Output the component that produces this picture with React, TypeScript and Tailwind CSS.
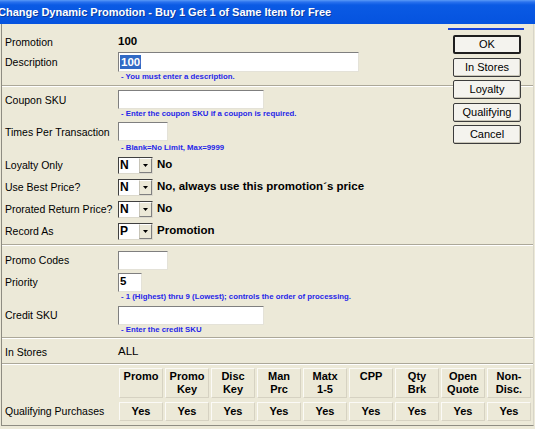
import React from "react";

const font = "font-['Liberation_Sans',Arial,sans-serif]";
const hintCls = "text-[7.8px] font-bold text-[#2626e8] leading-[10px]";

const Label = ({ children }: { children: React.ReactNode }) => (
  <div className="w-[113px] shrink-0 text-[10.5px] leading-[12px] whitespace-nowrap">{children}</div>
);

const TextBox = ({ w, h = 19, children }: { w: number; h?: number; children?: React.ReactNode }) => (
  <div
    className="flex items-center bg-white border border-t-[#7f7f7f] border-l-[#7f7f7f] border-r-[#e4e2d8] border-b-[#e4e2d8] pl-[1px]"
    style={{ width: w, height: h }}
  >
    {children}
  </div>
);

const Hint = ({ children }: { children: React.ReactNode }) => (
  <div className={`h-[10px] pl-[119px] ${hintCls} whitespace-nowrap`}>{children}</div>
);

const Divider = ({ className = "" }: { className?: string }) => (
  <div className={`h-[2px] border-t border-t-[#aca899] border-b border-b-white ${className}`} />
);

const ComboRow = ({ label, value, text }: { label: string; value: string; text: string }) => (
  <div className="flex items-center h-[22px] pl-[3px]">
    <Label>{label}</Label>
    <div className="flex h-[17px] w-[35px] bg-white border border-t-[#404040] border-l-[#404040] border-r-[#dcd9cc] border-b-[#dcd9cc]">
      <div className="flex-1 flex items-center pl-[1px] text-[12px] font-bold leading-none">{value}</div>
      <div className="w-[13px] h-full flex items-center justify-center bg-[#ece9d8] border border-t-white border-l-[#c8c5b8] border-r-[#808080] border-b-[#808080]">
        <svg width="5" height="3" viewBox="0 0 5 3">
          <path d="M0 0H5L2.5 3Z" fill="#000" />
        </svg>
      </div>
    </div>
    <div className="ml-[4px] text-[11.5px] font-bold whitespace-nowrap">{text}</div>
  </div>
);

const Btn = ({ label, primary }: { label: string; primary?: boolean }) => (
  <div
    className={`h-[19px] w-[68px] flex items-center justify-center text-[11px] rounded-[2px] bg-[#f4f3ee] ${
      primary ? "border-2 border-[#1e1e1e]" : "border border-[#3c3c3c] shadow-[inset_-1px_-1px_0_#c9c6b8]"
    }`}
  >
    {label}
  </div>
);

const columns = [
  ["Promo", ""],
  ["Promo", "Key"],
  ["Disc", "Key"],
  ["Man", "Prc"],
  ["Matx", "1-5"],
  ["CPP", ""],
  ["Qty", "Brk"],
  ["Open", "Quote"],
  ["Non-", "Disc."],
];

const cellCls =
  "w-[44px] bg-[#ece9d8] border border-t-[#fbfaf6] border-l-[#fbfaf6] border-r-[#d6d2c2] border-b-[#d6d2c2] text-[11px] font-bold text-center";

export default function App() {
  return (
    <div className={`w-[535px] h-[429px] bg-[#ece9d8] flex flex-col overflow-hidden text-black ${font}`}>
      {/* title bar */}
      <div className="h-[24px] shrink-0 flex items-center bg-[linear-gradient(to_bottom,#5a9af7_0px,#2a72ee_2px,#0a5ae4_5px,#0553df_100%)]">
        <span className="-ml-[2px] text-white font-bold text-[11px] whitespace-nowrap [text-shadow:1px_1px_0_#0a3aa0]">
          Change Dynamic Promotion - Buy 1 Get 1 of Same Item for Free
        </span>
      </div>

      {/* dialog body */}
      <div className="relative flex-1 mx-[1px] mb-[3px] border-l border-r border-b border-l-[#8e8c82] border-r-[#d8d5c8] border-b-[#8e8c82] flex flex-col">
        {/* buttons, drawn over the divider */}
        <div className="absolute top-[4px] left-[446px] w-[76px] flex flex-col">
          <div className="h-[2px] bg-[#1a44dc]" />
          <div className="mt-[5px] ml-[5px] flex flex-col gap-[3.5px]">
            <Btn label="OK" primary />
            <Btn label="In Stores" />
            <Btn label="Loyalty" />
            <Btn label="Qualifying" />
            <Btn label="Cancel" />
          </div>
        </div>

        <div className="mt-[8px] h-[20px] flex items-center pl-[3px]">
          <Label>Promotion</Label>
          <div className="text-[11.5px] font-bold">100</div>
        </div>
        <div className="h-[20px] flex items-center pl-[3px]">
          <Label>Description</Label>
          <TextBox w={241} h={20}>
            <span className="bg-[#316ac5] text-white font-bold text-[11.5px] leading-[14px] px-[1px]">100</span>
          </TextBox>
        </div>
        <Hint>- You must enter a description.</Hint>
        <Divider className="mt-[3px]" />

        <div className="mt-[3px] h-[19px] flex items-center pl-[3px]">
          <Label>Coupon SKU</Label>
          <TextBox w={146} />
        </div>
        <Hint>- Enter the coupon SKU if a coupon is required.</Hint>

        <div className="mt-[3px] h-[19px] flex items-center pl-[3px]">
          <Label>Times Per Transaction</Label>
          <TextBox w={50} />
        </div>
        <div className="mt-[2px]">
          <Hint>- Blank=No Limit, Max=9999</Hint>
        </div>

        <div className="mt-[1px]">
          <ComboRow label="Loyalty Only" value="N" text="No" />
          <ComboRow label="Use Best Price?" value="N" text="No, always use this promotion´s price" />
          <ComboRow label="Prorated Return Price?" value="N" text="No" />
          <ComboRow label="Record As" value="P" text="Promotion" />
        </div>
        <Divider className="mt-[2px]" />

        <div className="mt-[4px] h-[20px] flex items-center pl-[3px]">
          <Label>Promo Codes</Label>
          <TextBox w={50} />
        </div>
        <div className="mt-[2px] h-[20px] flex items-center pl-[3px]">
          <Label>Priority</Label>
          <TextBox w={24}>
            <span className="text-[11.5px] font-bold">5</span>
          </TextBox>
        </div>
        <Hint>- 1 (Highest) thru 9 (Lowest); controls the order of processing.</Hint>

        <div className="mt-[3px] h-[20px] flex items-center pl-[3px]">
          <Label>Credit SKU</Label>
          <TextBox w={146} />
        </div>
        <Hint>- Enter the credit SKU</Hint>
        <Divider className="mt-[2px]" />

        <div className="mt-[2px] h-[22px] flex items-center pl-[3px]">
          <Label>In Stores</Label>
          <div className="text-[11.5px]">ALL</div>
        </div>
        <Divider />

        {/* qualifying purchases table */}
        <div className="mt-[3px] pl-[3px] flex flex-col gap-[4px]">
          <div className="flex">
            <div className="w-[114px] shrink-0" />
            <div className="flex gap-[2px]">
              {columns.map(([a, b], i) => (
                <div key={i} className={`${cellCls} h-[30px] pt-[1px] leading-[13px]`}>
                  <div>{a}</div>
                  {b && <div>{b}</div>}
                </div>
              ))}
            </div>
          </div>
          <div className="flex items-center">
            <div className="w-[114px] shrink-0 text-[10.5px] whitespace-nowrap">Qualifying Purchases</div>
            <div className="flex gap-[2px]">
              {columns.map((_, i) => (
                <div key={i} className={`${cellCls} h-[19px] flex items-center justify-center`}>
                  Yes
                </div>
              ))}
            </div>
          </div>
        </div>
      </div>
    </div>
  );
}
